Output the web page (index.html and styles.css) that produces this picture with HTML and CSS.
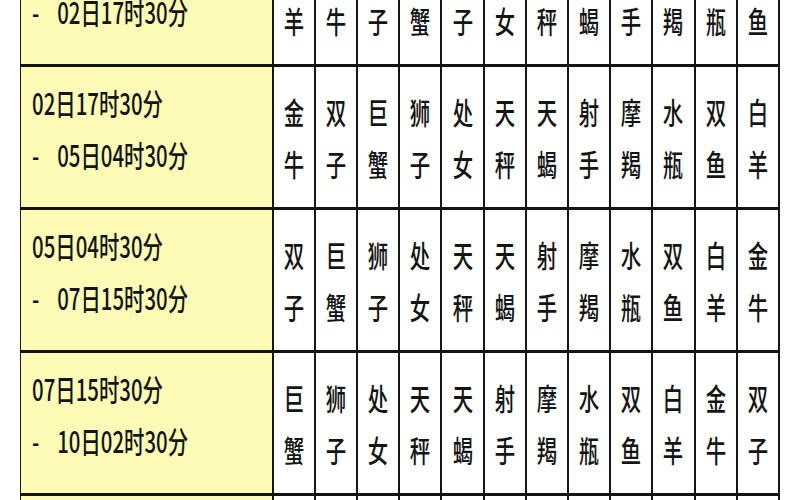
FILE: index.html
```html
<!DOCTYPE html>
<html lang="zh-CN">
<head>
<meta charset="utf-8">
<title>星座表</title>
<link rel="stylesheet" href="styles.css">
</head>
<body>
<table class="chart">
  <colgroup>
    <col class="c-date">
    <col span="12" class="c-sign">
  </colgroup>
  <tbody>
    <tr>
      <td class="date"><div class="dl">29日06时30分</div><div class="dl"><span class="dash">-</span>02日17时30分</div></td>
      <td><div class="v">白<br>羊</div></td><td><div class="v">金<br>牛</div></td><td><div class="v">双<br>子</div></td><td><div class="v">巨<br>蟹</div></td><td><div class="v">狮<br>子</div></td><td><div class="v">处<br>女</div></td><td><div class="v">天<br>秤</div></td><td><div class="v">天<br>蝎</div></td><td><div class="v">射<br>手</div></td><td><div class="v">摩<br>羯</div></td><td><div class="v">水<br>瓶</div></td><td><div class="v">双<br>鱼</div></td>
    </tr>
    <tr>
      <td class="date"><div class="dl">02日17时30分</div><div class="dl"><span class="dash">-</span>05日04时30分</div></td>
      <td><div class="v">金<br>牛</div></td><td><div class="v">双<br>子</div></td><td><div class="v">巨<br>蟹</div></td><td><div class="v">狮<br>子</div></td><td><div class="v">处<br>女</div></td><td><div class="v">天<br>秤</div></td><td><div class="v">天<br>蝎</div></td><td><div class="v">射<br>手</div></td><td><div class="v">摩<br>羯</div></td><td><div class="v">水<br>瓶</div></td><td><div class="v">双<br>鱼</div></td><td><div class="v">白<br>羊</div></td>
    </tr>
    <tr>
      <td class="date"><div class="dl">05日04时30分</div><div class="dl"><span class="dash">-</span>07日15时30分</div></td>
      <td><div class="v">双<br>子</div></td><td><div class="v">巨<br>蟹</div></td><td><div class="v">狮<br>子</div></td><td><div class="v">处<br>女</div></td><td><div class="v">天<br>秤</div></td><td><div class="v">天<br>蝎</div></td><td><div class="v">射<br>手</div></td><td><div class="v">摩<br>羯</div></td><td><div class="v">水<br>瓶</div></td><td><div class="v">双<br>鱼</div></td><td><div class="v">白<br>羊</div></td><td><div class="v">金<br>牛</div></td>
    </tr>
    <tr>
      <td class="date"><div class="dl">07日15时30分</div><div class="dl"><span class="dash">-</span>10日02时30分</div></td>
      <td><div class="v">巨<br>蟹</div></td><td><div class="v">狮<br>子</div></td><td><div class="v">处<br>女</div></td><td><div class="v">天<br>秤</div></td><td><div class="v">天<br>蝎</div></td><td><div class="v">射<br>手</div></td><td><div class="v">摩<br>羯</div></td><td><div class="v">水<br>瓶</div></td><td><div class="v">双<br>鱼</div></td><td><div class="v">白<br>羊</div></td><td><div class="v">金<br>牛</div></td><td><div class="v">双<br>子</div></td>
    </tr>
    <tr>
      <td class="date"><div class="dl">10日02时30分</div><div class="dl"><span class="dash">-</span>12日13时30分</div></td>
      <td><div class="v">狮<br>子</div></td><td><div class="v">处<br>女</div></td><td><div class="v">天<br>秤</div></td><td><div class="v">天<br>蝎</div></td><td><div class="v">射<br>手</div></td><td><div class="v">摩<br>羯</div></td><td><div class="v">水<br>瓶</div></td><td><div class="v">双<br>鱼</div></td><td><div class="v">白<br>羊</div></td><td><div class="v">金<br>牛</div></td><td><div class="v">双<br>子</div></td><td><div class="v">巨<br>蟹</div></td>
    </tr>
  </tbody>
</table>
</body>
</html>
```

FILE: styles.css
```css
html, body {
  margin: 0;
  padding: 0;
  background: #ffffff;
  overflow: hidden;
}

body {
  font-family: "Noto Sans CJK SC", "Noto Sans", sans-serif;
  color: #151515;
}

.chart {
  border-collapse: collapse;
  table-layout: fixed;
  width: 760px;
  margin: -79px 0 0 20px;
}

.c-date {
  width: 252px;
}

.c-sign {
  width: 42.17px;
}

.chart td {
  height: 143px;
  box-sizing: border-box;
  padding: 0;
  border-top: 3px solid #141414;
  border-bottom: 3px solid #141414;
  border-left: 2px solid #161616;
  border-right: 2px solid #161616;
  text-align: center;
  vertical-align: middle;
  overflow: hidden;
}

.chart td.date {
  background: #fefbb7;
  text-align: left;
  vertical-align: top;
  padding: 9px 0 0 11px;
  border-left-width: 1px;
}

.dl {
  font-size: 30px;
  line-height: 52px;
  height: 52px;
  white-space: nowrap;
  transform: scaleX(0.68);
  transform-origin: left center;
  font-weight: 500;
}

.dash {
  display: inline-block;
  width: 37px;
}

.v {
  display: inline-block;
  font-size: 30px;
  line-height: 52px;
  transform: scaleX(0.68);
  font-weight: 500;
}
```
